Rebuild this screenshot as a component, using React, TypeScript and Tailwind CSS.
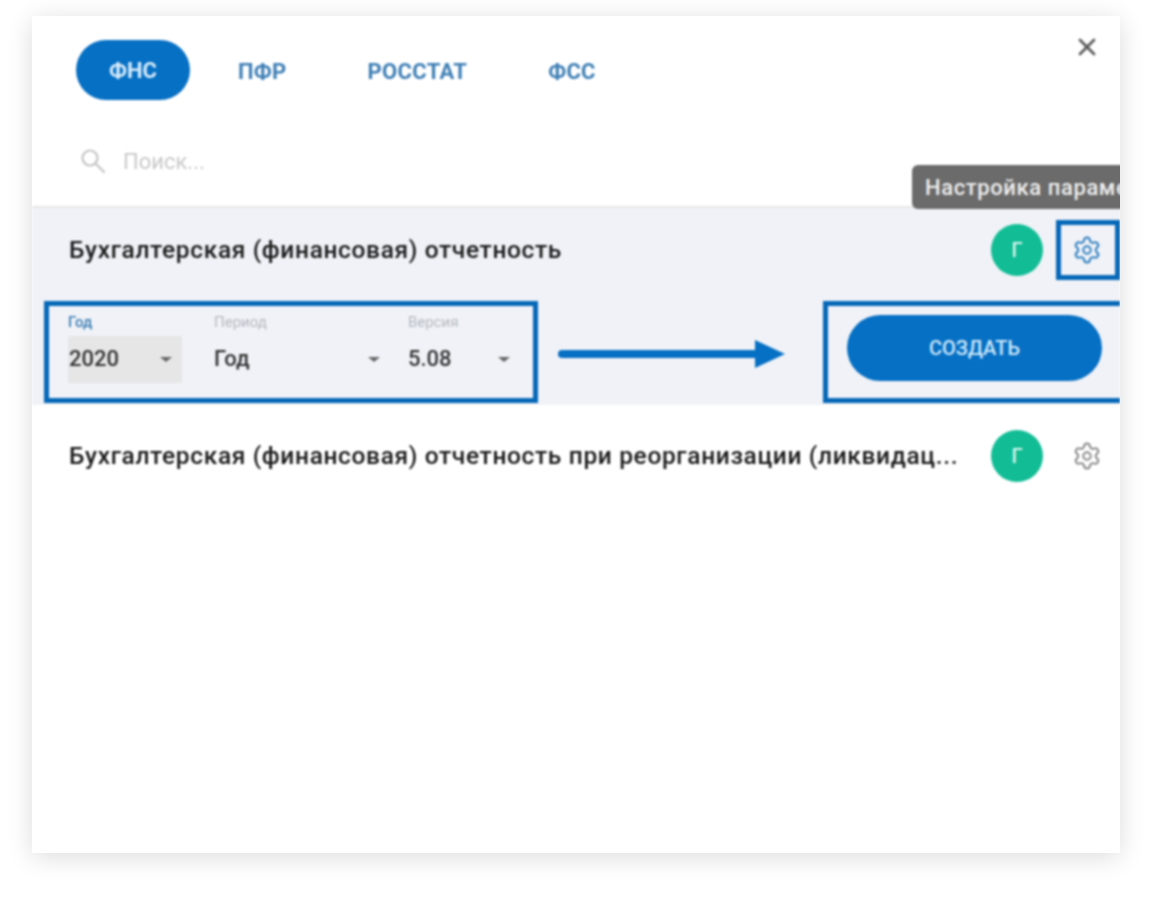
import React from "react";
import { Settings, X } from "lucide-react";

function Caret() {
  return <span className="w-0 h-0 border-x-[6px] border-x-transparent border-t-[5px] border-t-[#666]" />;
}

function Field({ label, value, className, labelClass, valueClass }: { label: string; value: string; className: string; labelClass: string; valueClass: string }) {
  return (
    <div className={className}>
      <div className={`text-[15px] leading-[16px] h-[16px] ${labelClass}`}>{label}</div>
      <div className={`mt-[6px] h-[47px] flex items-center justify-between ${valueClass}`}>
        <span className="text-[22px] font-medium text-[#333] -mt-[3px]">{value}</span>
        <Caret />
      </div>
    </div>
  );
}

function Avatar() {
  return (
    <div className="w-[52px] h-[52px] rounded-full bg-[#12bd96] text-[#d8f5ee] flex items-center justify-center text-[20px] font-medium shrink-0">
      Г
    </div>
  );
}

export default function App() {
  return (
    <div className="w-[1152px] h-[904px] bg-white pt-4 pl-8 font-['Roboto',sans-serif] overflow-hidden">
      <div className="relative w-[1088px] h-[837px] bg-white overflow-hidden shadow-[0_4px_24px_rgba(0,0,0,0.14)]">
        <div className="blur-[0.8px]">
          <div className="flex items-center pl-11 pt-6 h-[84px]">
            <div className="w-[114px] h-[60px] rounded-full bg-[#0670c4] text-[#d8ecfa] text-[22px] font-bold flex items-center justify-center">ФНС</div>
            <span className="ml-[48px] mt-[2px] text-[22px] tracking-[0.3px] font-bold text-[#3f7fb5]">ПФР</span>
            <span className="ml-[81px] mt-[2px] text-[22px] tracking-[0.3px] font-bold text-[#3f7fb5]">РОССТАТ</span>
            <span className="ml-[81px] mt-[2px] text-[22px] tracking-[0.3px] font-bold text-[#3f7fb5]">ФСС</span>
          </div>
          <div className="flex items-center pl-[48px] h-[108px] border-b-2 border-[#e6e6e6]">
            <svg width="26" height="26" viewBox="0 0 26 26" fill="none" stroke="#c4c4c4" strokeWidth="2.2" strokeLinecap="round" className="mt-[16px]">
              <circle cx="10" cy="10" r="7.5" />
              <path d="M16 16L24 24" />
            </svg>
            <span className="ml-[17px] mt-[16px] text-[22px] text-[#c8c8c8]">Поиск...</span>
          </div>

          <div className="bg-[#f0f2f7] h-[197px] pt-[12px]">
            <div className="flex items-center h-[60px]">
              <div className="pl-[37px] flex-1 text-[24.5px] tracking-[0.65px] font-medium text-[#1a1a1a]">Бухгалтерская (финансовая) отчетность</div>
              <Avatar />
              <div className="ml-[13px] w-[64px] h-[60px] border-[5px] border-[#0568b8] flex items-center justify-center">
                <Settings size={30} strokeWidth={1.6} className="text-[#2f80c0] -ml-[2px]" />
              </div>
            </div>
            <div className="flex items-center h-[102px] mt-[21px]">
              <div className="ml-[12px] w-[494px] h-[102px] border-[5px] border-[#0568b8] flex pl-[19px] pt-[8px]">
                <Field label="Год" value="2020" className="w-[114px]" labelClass="text-[#3f7fb5] font-medium" valueClass="bg-[#e6e6e6] pl-px pr-[10px]" />
                <Field label="Период" value="Год" className="ml-[32px] w-[170px]" labelClass="text-[#b4b8be]" valueClass="pr-[4px]" />
                <Field label="Версия" value="5.08" className="ml-[24px] w-[104px]" labelClass="text-[#b4b8be]" valueClass="pr-[2px]" />
              </div>
              <svg width="228" height="30" viewBox="0 0 228 30" className="ml-[20px] shrink-0 mt-[4px]">
                <path d="M4 15H200" stroke="#0670c4" strokeWidth="8" strokeLinecap="round" />
                <path d="M197 1L227 15L197 29Z" fill="#0670c4" />
              </svg>
              <div className="ml-[37px] flex-1 h-[102px] border-[5px] border-r-0 border-[#0568b8] flex items-center pl-[19px] pb-[8px]">
                <div className="w-[255px] h-[66px] rounded-full bg-[#0670c4] text-[#cfe8fa] text-[20px] font-medium flex items-center justify-center">СОЗДАТЬ</div>
              </div>
            </div>
          </div>

          <div className="flex items-center h-[102px]">
            <div className="pl-[37px] flex-1 text-[24.5px] tracking-[0.65px] font-medium text-[#1a1a1a] truncate">Бухгалтерская (финансовая) отчетность при реорганизации (ликвидац...</div>
            <Avatar />
            <div className="ml-[13px] w-[64px] flex items-center justify-center">
              <Settings size={30} strokeWidth={1.6} className="text-[#8a8a8a] -ml-[2px]" />
            </div>
          </div>

          <X size={28} strokeWidth={2.4} className="absolute top-[17px] right-[19px] text-[#5a5a5a]" />
          <div className="absolute top-[149px] left-[880px] w-[300px] h-[44px] pl-[13px] rounded-[6px] bg-[#6b6b6b] text-[#eeeeee] text-[22px] tracking-[0.6px] font-medium flex items-center whitespace-nowrap">
            Настройка параметров
          </div>
        </div>
      </div>
    </div>
  );
}
